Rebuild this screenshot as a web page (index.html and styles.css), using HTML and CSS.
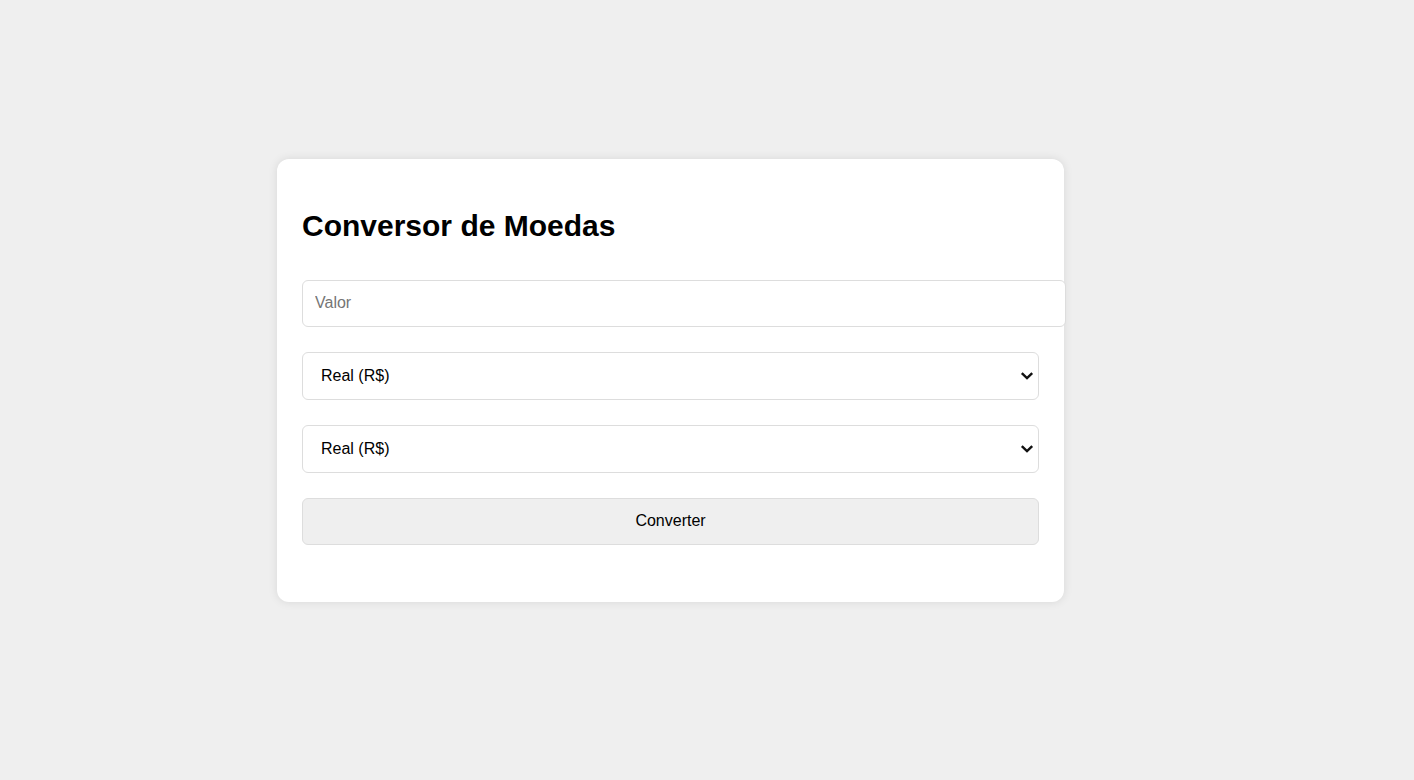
FILE: index.html
```html
<!DOCTYPE html>
<html lang="pt-BR">
<head>
<meta charset="UTF-8">
<title>Conversor de Moedas</title>
<link rel="stylesheet" href="styles.css">
</head>
<body>
<main class="page">
  <section class="card">
    <h1 class="title">Conversor de Moedas</h1>
    <div class="form">
      <input class="field" type="number" placeholder="Valor">
      <div class="select-wrap">
        <select class="select">
          <option>Real (R$)</option>
          <option>Dólar (US$)</option>
          <option>Euro (€)</option>
        </select>
        <svg class="chevron" width="14" height="10" viewBox="0 0 14 10" aria-hidden="true"><path d="M1.8 2.2 L7 7.2 L12.2 2.2" fill="none" stroke="#111" stroke-width="2.4"/></svg>
      </div>
      <div class="select-wrap">
        <select class="select">
          <option>Real (R$)</option>
          <option>Dólar (US$)</option>
          <option>Euro (€)</option>
        </select>
        <svg class="chevron" width="14" height="10" viewBox="0 0 14 10" aria-hidden="true"><path d="M1.8 2.2 L7 7.2 L12.2 2.2" fill="none" stroke="#111" stroke-width="2.4"/></svg>
      </div>
      <button class="button" type="button">Converter</button>
    </div>
  </section>
</main>
</body>
</html>
```
FILE: styles.css
```css
html, body {
  margin: 0;
  padding: 0;
  background: #efefef;
  font-family: "Liberation Sans", Arial, sans-serif;
}

.page {
  min-height: 780px;
  box-sizing: border-box;
  padding: 159px 0 0 277px;
}

.card {
  width: 737px;
  padding: 49px 25px 57px;
  background: #ffffff;
  border-radius: 12px;
  box-shadow: 0 0 10px rgba(0, 0, 0, 0.1);
}

.title {
  margin: 0 0 37px;
  font-size: 30px;
  line-height: 35px;
  font-weight: bold;
  color: #000;
}

.form {
  display: flex;
  flex-direction: column;
  align-items: flex-start;
  gap: 25px;
}

.field {
  box-sizing: content-box;
  width: 100%;
  height: 44px;
  padding: 0 13px 1px 12px;
  margin: 0;
  border: 1px solid #dddddd;
  border-radius: 6px;
  font-family: "Liberation Sans", Arial, sans-serif;
  font-size: 16px;
  color: #000;
  background: #fff;
  outline: none;
  -moz-appearance: textfield;
}

.field::-webkit-outer-spin-button,
.field::-webkit-inner-spin-button {
  -webkit-appearance: none;
  margin: 0;
}

.field::placeholder {
  color: #757575;
}

.select-wrap {
  position: relative;
  width: 100%;
  height: 48px;
}

.select {
  box-sizing: border-box;
  display: block;
  width: 100%;
  height: 48px;
  padding: 0 30px 2px 18px;
  margin: 0;
  border: 1px solid #dddddd;
  border-radius: 6px;
  font-family: "Liberation Sans", Arial, sans-serif;
  font-size: 16px;
  color: #000;
  background: #fff;
  -webkit-appearance: none;
  appearance: none;
}

.chevron {
  position: absolute;
  right: 5px;
  top: 19px;
  pointer-events: none;
}

.button {
  box-sizing: border-box;
  width: 100%;
  height: 47px;
  margin: 0;
  padding: 0 0 2px;
  border: 1px solid #dddddd;
  border-radius: 6px;
  background: #efefef;
  font-family: "Liberation Sans", Arial, sans-serif;
  font-size: 16px;
  color: #000;
  cursor: pointer;
}
```
